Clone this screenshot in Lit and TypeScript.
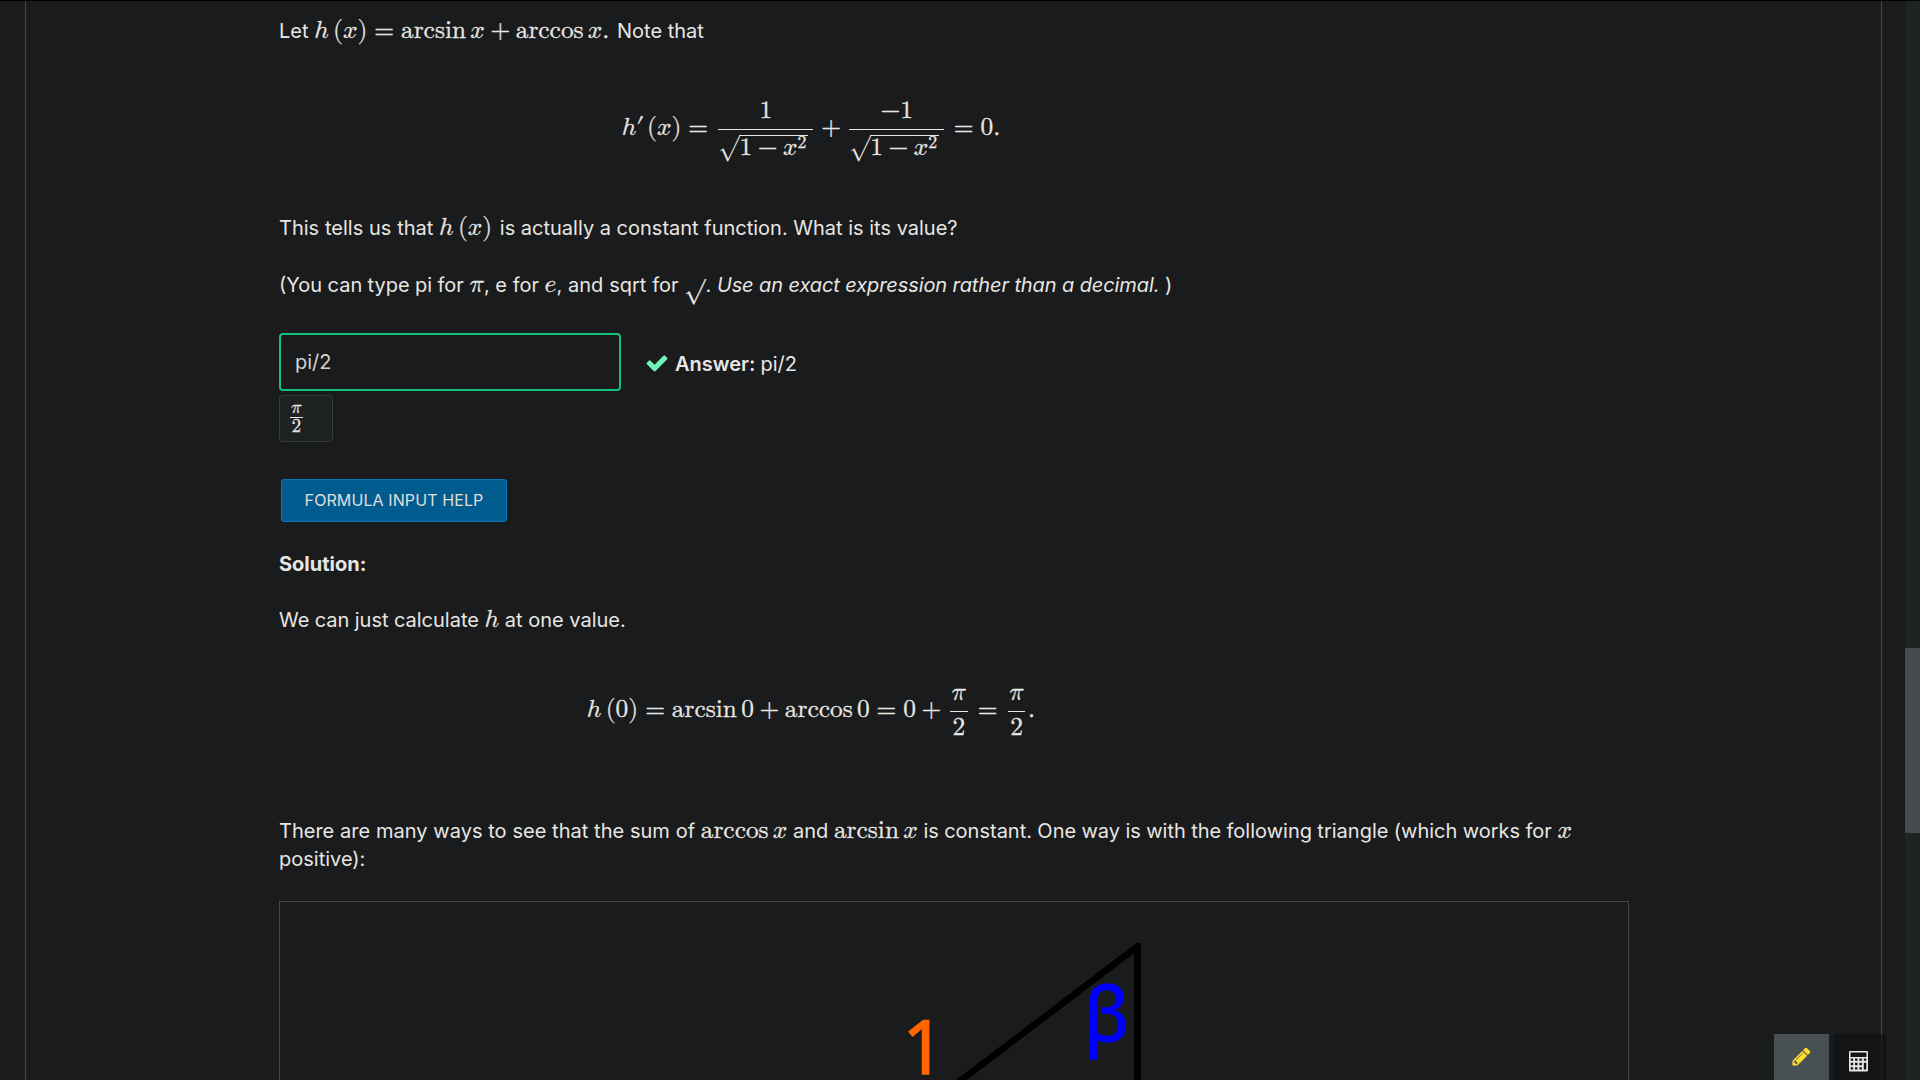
import { LitElement, html, css } from "lit";
import { customElement } from "lit/decorators.js";

@customElement("triangle-figure")
class TriangleFigure extends LitElement {
  static styles = css`
    :host { display: block; border: 1px solid #43484b; height: 400px; }
    .canvas { display: block; margin: 0 auto; width: 460px; height: 400px; }
    .edge { fill: #000; }
    .one, .beta { font-family: "Noto Sans", sans-serif; font-size: 74px; stroke-width: 1.3; }
    .one { fill: #ff6600; stroke: #ff6600; }
    .beta { fill: #0000ff; stroke: #0000ff; }
  `;

  render() {
    return html`
      <svg class="canvas" viewBox="724 902 460 400">
        <path class="edge" fill-rule="evenodd"
          d="M1136.6 943H1141V1240H745ZM1134 953.3L765 1233H1134Z" />
        <text class="one" x="902.5" y="1073.5">1</text>
        <text class="beta" x="1084" y="1041">β</text>
      </svg>`;
  }
}

@customElement("tool-dock")
class ToolDock extends LitElement {
  static styles = css`
    :host { display: flex; gap: 4px; }
    .tool { box-sizing: border-box; height: 46px; display: flex; justify-content: center; }
    .pencil { width: 55px; background: #495054; padding-top: 12px; }
    .calc { width: 53px; background: rgba(15, 17, 18, 0.7); padding: 17px 3px 0 0; }
    .pencil svg { width: 21px; height: 21px; fill: #fddf2b; }
    .calc svg { width: 19px; height: 20.5px; }
    .body { fill: #e8e6e3; }
  `;

  render() {
    return html`
      <div class="tool pencil">
        <svg viewBox="0 0 1792 1792"><path d="M491 1536l91-91-235-235-91 91v107h128v128h107zm523-928q0-22-22-22-10 0-17 7l-542 542q-7 7-7 17 0 22 22 22 10 0 17-7l542-542q7-7 7-17zm-54-192l416 416-832 832h-416v-416zm683 96q0 53-37 90l-166 166-416-416 166-165q36-38 90-38 53 0 91 38l235 234q37 39 37 91z"/></svg>
      </div>
      <div class="tool calc">
        <svg viewBox="0 0 19 20.5"><path class="body" fill-rule="evenodd" d="M1 0h17a1 1 0 0 1 1 1v18.5a1 1 0 0 1-1 1H1a1 1 0 0 1-1-1V1a1 1 0 0 1 1-1ZM1.5 1.5v4.6h16V1.5ZM1.7 7.4v2.4h2.5V7.4ZM6 7.4v2.4h2.5V7.4ZM10.4 7.4v2.4h2.5V7.4ZM14.8 7.4v2.4h2.5V7.4ZM1.7 11.8v2.4h2.5v-2.4ZM6 11.8v2.4h2.5v-2.4ZM10.4 11.8v2.4h2.5v-2.4ZM14.8 11.8v6.8h2.5v-6.8ZM1.7 16.2v2.4h2.5v-2.4ZM6 16.2v2.4h2.5v-2.4ZM10.4 16.2v2.4h2.5v-2.4Z"/></svg>
      </div>`;
  }
}

@customElement("app-root")
class AppRoot extends LitElement {
  static styles = css`
    :host {
      display: block; position: relative; box-sizing: border-box;
      width: 1920px; height: 1080px; overflow: hidden;
      background: #1a1b1c; color: #e8e6e3;
      border-top: 1px solid #000;
      font-family: Inter, sans-serif; font-size: 20px; line-height: 28px;
    }
    .shell { display: flex; height: 1079px; }
    .page {
      box-sizing: border-box; width: 1857px; margin-left: 25px;
      border: solid #43484b; border-width: 0 1px;
      padding: 16px 252px 0 253px;
    }
    .track { margin-left: auto; width: 15px; background: #202324; padding-top: 647px; box-sizing: border-box; }
    .thumb { height: 185px; background: #454a4d; }
    p { margin: 0; white-space: nowrap; }
    math { font-family: "Latin Modern Math", "Liberation Serif", serif; font-size: 25.4px; -webkit-text-stroke: 0.3px #e8e6e3; }
    .display { box-sizing: border-box; width: 1064px; display: flex; justify-content: center; align-items: center; }
    .derivative { height: 169px; padding-top: 3px; }
    .evaluation { height: 183px; padding-bottom: 27px; }
    .loose { word-spacing: 0.2px; }
    .snug { word-spacing: -0.25px; }
    .call { margin-right: 2px; }
    em { letter-spacing: -0.1px; }
    .hint { margin-top: 29px; }
    .surd { vertical-align: 12px; line-height: 0; }
    .answer-row { display: flex; align-items: center; margin-top: 28px; }
    .field {
      box-sizing: border-box; width: 342px; height: 58px;
      border: 2px solid #10c277; border-radius: 4px;
      padding: 0 14px; font: inherit; color: #d5d2cd; background: transparent;
      margin: 0;
    }
    .verdict { display: flex; align-items: center; margin-left: 24px; padding-top: 4px; word-spacing: -0.6px; }
    .check { width: 24px; height: 24px; fill: #72f1b8; margin: 0 6px 2px 0; }
    strong { font-weight: 600; }
    .preview {
      box-sizing: border-box; width: 54px; height: 47px; margin-top: 4px;
      border: 1px solid #373c3e; border-radius: 4px; background: #1f2223;
      padding-left: 9px; display: flex; align-items: center;
    }
    .preview math { font-size: 26.5px; }
    .help {
      display: block; box-sizing: border-box; width: 226px; height: 43px;
      margin: 37px 0 0 2px; padding: 0 0 2px; border: 1px solid #0878b8; border-radius: 3px;
      background: #005c8f; color: #e0ded9; font: 16px Inter, sans-serif; letter-spacing: 0.1px;
    }
    .solution { margin-top: 28px; font-weight: 700; }
    .calculate { margin-top: 28px; }
    triangle-figure { margin-top: 28px; }
    tool-dock { position: absolute; left: 1774px; bottom: 0; }
  `;

  render() {
    return html`
      <div class="shell">
        <main class="page">
          <p>Let <math class="call"><mi>h</mi><mspace width="0.167em"></mspace><mo form="prefix" stretchy="false" lspace="0em" rspace="0em">(</mo><mi>x</mi><mo form="postfix" stretchy="false" lspace="0em" rspace="0em">)</mo><mo>=</mo><mi>arcsin</mi><mspace width="0.167em"></mspace><mi>x</mi><mo>+</mo><mi>arccos</mi><mspace width="0.167em"></mspace><mi>x</mi><mtext>.</mtext></math> Note that</p>
          <div class="display derivative">
            <math displaystyle="true"><mi>h</mi><mo lspace="0em" rspace="0em">′</mo><mspace width="0.11em"></mspace><mo form="prefix" stretchy="false" lspace="0em" rspace="0em">(</mo><mi>x</mi><mo form="postfix" stretchy="false" lspace="0em" rspace="0em">)</mo><mo>=</mo><mspace width="0.09em"></mspace><mfrac><mn>1</mn><msqrt><mn>1</mn><mo>−</mo><msup><mi>x</mi><mn>2</mn></msup></msqrt></mfrac><mspace width="0.05em"></mspace><mo form="infix">+</mo><mspace width="0.06em"></mspace><mfrac><mrow><mo form="prefix">−</mo><mn>1</mn></mrow><msqrt><mn>1</mn><mo>−</mo><msup><mi>x</mi><mn>2</mn></msup></msqrt></mfrac><mspace width="0.06em"></mspace><mo>=</mo><mn>0</mn><mtext>.</mtext></math>
          </div>
          <p><span class="loose">This tells us that</span> <math class="call"><mi>h</mi><mspace width="0.167em"></mspace><mo form="prefix" stretchy="false" lspace="0em" rspace="0em">(</mo><mi>x</mi><mo form="postfix" stretchy="false" lspace="0em" rspace="0em">)</mo></math> is actually a constant function. What is its value?</p>
          <p class="hint"><span class="snug">(You can type pi for</span> <math><mi>π</mi></math>, e for <math><mi>e</mi></math><span class="loose">, and sqrt for </span><math class="surd"><mtext>√</mtext></math>. <em>Use an exact expression rather than a decimal.</em> )</p>
          <div class="answer-row">
            <input class="field" .value=${"pi/2"} />
            <div class="verdict">
              <svg class="check" viewBox="0 0 1792 1792"><path d="M1671 566q0 40-28 68l-724 724-136 136q-28 28-68 28t-68-28l-136-136-362-362q-28-28-28-68t28-68l136-136q28-28 68-28t68 28l294 295 656-657q28-28 68-28t68 28l136 136q28 28 28 68z"/></svg>
              <span><strong>Answer:</strong> pi/2</span>
            </div>
          </div>
          <div class="preview"><math><mfrac><mrow><mspace width="0.06em"></mspace><mi>π</mi><mspace width="0.06em"></mspace></mrow><mn>2</mn></mfrac></math></div>
          <button class="help">FORMULA INPUT HELP</button>
          <p class="solution">Solution:</p>
          <p class="calculate"><span class="snug">We can just calculate</span> <math><mi>h</mi></math> at one value.</p>
          <div class="display evaluation">
            <math displaystyle="true"><mi>h</mi><mspace width="0.167em"></mspace><mo form="prefix" stretchy="false" lspace="0em" rspace="0em">(</mo><mn>0</mn><mo form="postfix" stretchy="false" lspace="0em" rspace="0em">)</mo><mo>=</mo><mi>arcsin</mi><mspace width="0.167em"></mspace><mn>0</mn><mo>+</mo><mi>arccos</mi><mspace width="0.167em"></mspace><mn>0</mn><mo>=</mo><mn>0</mn><mo>+</mo><mspace width="0.09em"></mspace><mfrac><mrow><mspace width="0.06em"></mspace><mi>π</mi><mspace width="0.06em"></mspace></mrow><mn>2</mn></mfrac><mspace width="0.09em"></mspace><mo>=</mo><mspace width="0.09em"></mspace><mfrac><mrow><mspace width="0.06em"></mspace><mi>π</mi><mspace width="0.06em"></mspace></mrow><mn>2</mn></mfrac><mspace width="0.07em"></mspace><mtext>.</mtext></math>
          </div>
          <p><span class="loose">There are many ways to see that the sum of</span> <math><mi>arccos</mi><mspace width="0.167em"></mspace><mi>x</mi></math> and <math><mi>arcsin</mi><mspace width="0.167em"></mspace><mi>x</mi></math> <span class="snug">is constant. One way is with the following triangle (which works for</span> <math><mi>x</mi></math><br />positive):</p>
          <triangle-figure></triangle-figure>
        </main>
        <div class="track"><div class="thumb"></div></div>
      </div>
      <tool-dock></tool-dock>`;
  }
}
